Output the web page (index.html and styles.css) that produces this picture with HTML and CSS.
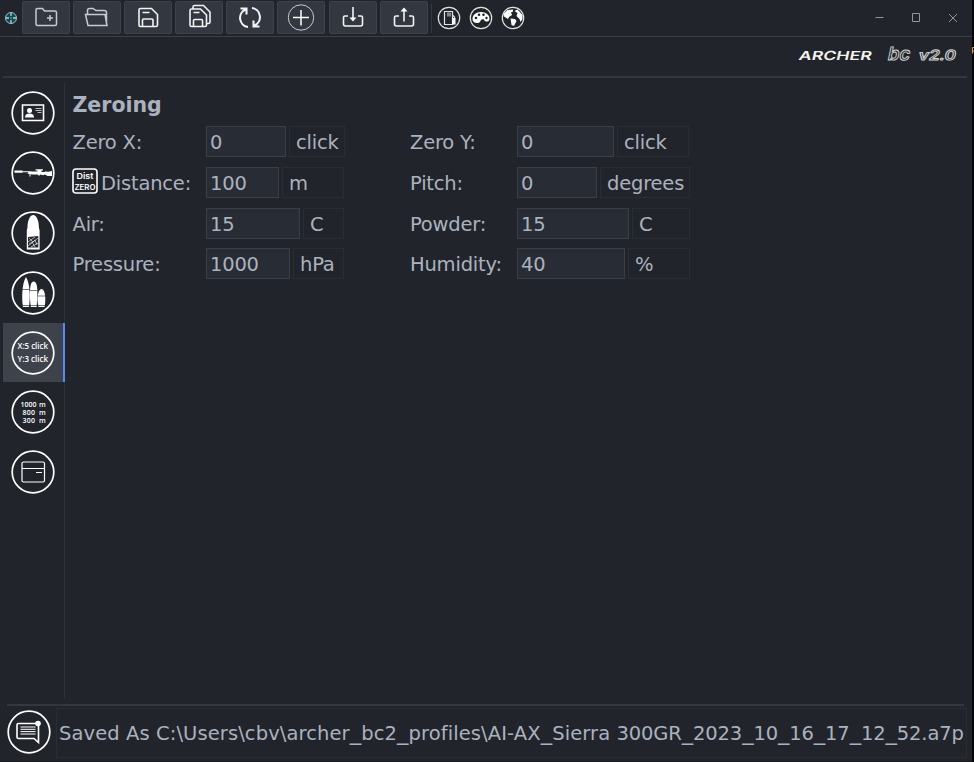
FILE: index.html
```
<!DOCTYPE html>
<html lang="en">
<head>
<meta charset="utf-8">
<title>ARCHER bc v2.0</title>
<link rel="stylesheet" href="styles.css">
</head>
<body>
<div class="window">
  <header class="titlebar">
    <svg class="app-icon" viewBox="0 0 14 14"><circle cx="7" cy="7" r="5.5" fill="#0c4c56" stroke="#a9bfc1"/><path d="M7 2v3M7 9v3M2 7h3M9 7h3M7 6.5v1" stroke="#b8d0d1" stroke-width="1.3"/></svg>
    <div class="tools">
      <button class="tool"><svg viewBox="0 0 48 33"><path d="M14 23V9q0-1.500 1.500-1.500h5l2 2.500h10.500q1.500 0 1.500 1.500V23q0 1.500-1.500 1.500H15.500Q14 24.500 14 23zM28 14v6M25 17h6"/></svg></button>
      <button class="tool"><svg viewBox="0 0 48 33"><path d="M14.500 13V9.500q0-2 2-2H20l3 2h8q2.500 0 2.500 2V23M12.500 13.500h19.500l2 11H15z"/></svg></button>
      <button class="tool bright"><svg viewBox="0 0 48 33"><path d="M15 9q0-1.500 1.500-1.500h11l6 6V24q0 1.500-1.500 1.500H16.500Q15 25.500 15 24zM18.500 25v-6q0-1 1-1h8.500q1 0 1 1v6M18.500 11.500h7"/></svg></button>
      <button class="tool bright"><svg viewBox="0 0 48 33"><path d="M15 9.500q0-1.500 1.500-1.500h9l6 6V24q0 1.500-1.500 1.500H16.500Q15 25.500 15 24zM18.500 25v-5.500q0-1 1-1h7q1 0 1 1V25M18.500 11.500h6M18 7.500V6q0-1.500 1.500-1.500h9l6.500 6.500V21q0 1.500-1.500 1.500H32"/></svg></button>
      <button class="tool bright"><svg viewBox="0 0 48 33"><path class="thick" d="M22 26A9.200 9.200 0 0 1 19.500 8.500M14.500 7.500h6v6M26 7A9.200 9.200 0 0 1 28.500 24.500M33.500 25.500h-6v-6"/></svg></button>
      <button class="tool"><svg viewBox="0 0 48 33"><circle cx="24" cy="16.500" r="12.700" stroke-width="1"/><path d="M24 9v15.500M16 16.500h16" stroke="#fff"/></svg></button>
      <button class="tool bright"><svg viewBox="0 0 48 33"><path d="M19 15h-3q-1.500 0-1.500 1.500V23q0 2 2 2h15q2 0 2-2v-6.500q0-1.500-1.500-1.500H29M24 6v12"/><path d="M20.500 16.500h7L24 20.500z" fill="#fff" stroke="none"/></svg></button>
      <button class="tool bright"><svg viewBox="0 0 48 33"><path d="M19 15h-3q-1.500 0-1.500 1.500V23q0 2 2 2h15q2 0 2-2v-6.500q0-1.500-1.500-1.500H29M24 20.500V8"/><path d="M20.500 10.500h7L24 6.500z" fill="#fff" stroke="none"/></svg></button>
    </div>
    <div class="rounds">
      <svg viewBox="0 0 24 24"><circle cx="12" cy="12" r="10.700"/><path d="M7.500 5.500h8v13h-8zM15.500 9l2 2v3"/><path d="M10 6.500h4v4h-4z" fill="#888" stroke="none"/><path d="M15 12h3.500v6.500H15z" fill="#fff" stroke="none"/></svg>
      <svg viewBox="0 0 24 24"><circle cx="12" cy="12" r="10.700"/><path d="M3.500 13c0-4 3.500-7 8.500-7 5 0 8.500 3 8.500 6.500 0 4-4.500 3.500-5 2-.8-2-3.500-1.500-4 .5-.5 3-8 3-8-2z" fill="#fff" stroke="none"/><g fill="#20242b" stroke="none"><circle cx="7" cy="12" r="1.300"/><circle cx="10" cy="8.700" r="1.300"/><circle cx="14.500" cy="8.700" r="1.300"/><circle cx="17.500" cy="12" r="1.200"/></g></svg>
      <svg viewBox="0 0 24 24"><circle cx="12" cy="12" r="10.700"/><path d="M2.500 8l4-4 5.500-.5v2l-2 1 1 2.500-3 2-1 2-4-2.500zM9.500 12.500l4.500.5 1.500 2-2.500 5-2.500-1-.5-3.500zM13.500 5l3-1.500 5 5.500v4l-2 3-1-3-3-3 1-3z" fill="#fff" stroke="none"/></svg>
    </div>
    <svg class="controls" viewBox="0 0 90 20"><path d="M6.500 10.500h8M43.500 6.500h7v8h-7zM80 7l8 8M88 7l-8 8"/></svg>
  </header>

  <div class="brand">
    <svg viewBox="0 0 170 30">
      <g transform="skewX(-12)"><text class="archer" x="9" y="23" textLength="73" lengthAdjust="spacingAndGlyphs">ARCHER</text></g>
      <g transform="skewX(-12)"><text class="version big" x="98" y="23" textLength="22" lengthAdjust="spacingAndGlyphs">bc</text><text class="version" x="129" y="23" textLength="37" lengthAdjust="spacingAndGlyphs">v2.0</text></g>
    </svg>
  </div>

  <div class="main">
    <nav class="sidebar">
      <a class="nav"><svg viewBox="0 0 46 46"><circle cx="23" cy="23" r="20.800"/><path d="M12.500 15h21v15.500h-21z" stroke-width="1.600"/><circle cx="19.500" cy="20.500" r="2.500" class="solid"/><path class="solid" d="M15 27.500q0-4 4.500-4t4.500 4z"/><path d="M25.500 18.500h6M25.500 20.500h6M27.500 22.500h4" stroke-width=".7"/></svg></a>
      <a class="nav"><svg viewBox="0 0 46 46"><circle cx="23" cy="23" r="20.800"/><path class="solid" d="M4.500 20.500h8v2.200h-8zM12.500 21.300h9v1h-9zM19 21.500h10l2 .5h3l1.500-.5 3 .3 3.500-.8v5h-4.500l-2.500-1.500-2 .8-2.500-.8-1.500 1.200-1.500-1.200h-6l-1-.5V26.500h-1V24l-2-.5zM25.500 19.300h7.500v1.200h-1.500v1.500h-4v-1.500h-2z"/></svg></a>
      <a class="nav"><svg viewBox="0 0 46 46"><circle cx="23" cy="23" r="20.800"/><path class="solid" d="M16.800 39.500V20.500l.7-3c0-7 2.500-12.500 5.700-12.500s5.700 5.500 5.700 12.500l.7 3v19z"/><path d="M18 27l10.300-1v11.500H18z" fill="#252930" stroke="none"/><path d="M18 32l7-5M18 36l10-8M21 37l7-4M19 28l4 4 2-2 2 5M19 34l3-2 3 5" stroke-width=".6"/></svg></a>
      <a class="nav"><svg viewBox="0 0 46 46"><circle cx="23" cy="23" r="20.800"/><path class="solid" d="M13 37c-1.500-9-1-24 3-30 4 6 4.500 21 3 30zM20.800 37c-1-8-1.500-22 1-24.500q1.900-2 3.800 0c2.500 2.500 2 16.500 1 24.500zM28.500 37c-1.500-6-1-14 1.200-17q1.800-2 3.600 0c2.200 3 2.700 11 1.200 17z"/><path d="M12 19.500h8M20 20.500h7M27.500 26h8M12 35.500h24" stroke="#20242b" stroke-width=".6"/></svg></a>
      <a class="nav active"><svg viewBox="0 0 46 46"><circle cx="23" cy="23" r="20.800"/><text class="click-text" x="7.500" y="18.800" textLength="30.500" lengthAdjust="spacingAndGlyphs">X:5 click</text><text class="click-text" x="7.500" y="32" textLength="30.500" lengthAdjust="spacingAndGlyphs">Y:3 click</text></svg></a>
      <a class="nav"><svg viewBox="0 0 46 46"><circle cx="23" cy="23" r="20.800"/><g class="range-text"><text x="10.500" y="17.500" textLength="16" lengthAdjust="spacingAndGlyphs">1000</text><text x="29" y="17.500">m</text><text x="12.500" y="25.500" textLength="12.500">800</text><text x="29" y="25.500">m</text><text x="12.500" y="33.500" textLength="12.500">300</text><text x="29" y="33.500">m</text></g></svg></a>
      <a class="nav"><svg viewBox="0 0 46 46"><circle cx="23" cy="23" r="20.800"/><rect x="12" y="13" width="22.500" height="20" rx="1.500" stroke-width="1.200"/><path d="M12 19.500h22M26 23.500h6" stroke-width="1.100"/></svg></a>
    </nav>
    <main class="content">
      <h1>Zeroing</h1>
      <div class="form">
        <label>Zero X:</label><div class="field"><span class="value w80">0</span><span class="unit u56">click</span></div>
        <label>Zero Y:</label><div class="field"><span class="value w97">0</span><span class="unit u72">click</span></div>
        <label><svg class="dist" viewBox="0 0 26 26"><rect x="1" y="1" width="24" height="24" rx="3"/><text class="dist-top" x="4.500" y="11" textLength="17" lengthAdjust="spacingAndGlyphs">Dist</text><text x="2.500" y="21.500" textLength="21" lengthAdjust="spacingAndGlyphs">ZERO</text></svg>Distance:</label><div class="field"><span class="value w73">100</span><span class="unit u62">m</span></div>
        <label>Pitch:</label><div class="field"><span class="value w80">0</span><span class="unit u90">degrees</span></div>
        <label>Air:</label><div class="field"><span class="value w94">15</span><span class="unit u41">C</span></div>
        <label>Powder:</label><div class="field"><span class="value w112">15</span><span class="unit u58">C</span></div>
        <label>Pressure:</label><div class="field"><span class="value w84">1000</span><span class="unit u51">hPa</span></div>
        <label>Humidity:</label><div class="field"><span class="value w108">40</span><span class="unit u62">%</span></div>
      </div>
    </main>
  </div>

  <footer class="footer">
    <svg class="message" viewBox="0 0 46 46"><circle cx="23" cy="23" r="20.800"/><path d="M31 14.500H12.500q-1.500 0-1.500 1.500v12q0 1.500 1.500 1.500H28l4.500 4V17" stroke-width="1.600"/><circle class="solid" cx="32" cy="14.500" r="2.800"/><path d="M14.500 18h15M14.500 20.300h15M14.500 22.600h15M14.500 25h15" stroke-width="1"/></svg>
    <div class="status"><span class="path">Saved As C:\Users\cbv\archer<u>_</u>bc2<u>_</u>profiles\AI-AX<u>_</u>Sierra </span>300GR<u>_</u>2023<u>_</u>10<u>_</u>16<u>_</u>17<u>_</u>12<u>_</u>52.a7p</div>
  </footer>
</div>
<svg class="edge" viewBox="0 0 2 762"><path d="M.5 47.500v6M.5 47.500h1.500M.5 51h1.500"/></svg>
</body>
</html>
```
FILE: styles.css
```
* { box-sizing: border-box; }
body { margin: 0; width: 974px; height: 762px; display: flex; overflow: hidden; background: #050607; color: #abb2bf; font: 19.5px "DejaVu Sans", sans-serif; }
.window { width: 972px; height: 762px; background: #21252b; display: flex; flex-direction: column; border-bottom: 1px solid #17191d; }
svg { display: block; fill: none; stroke: #fff; }
svg text { stroke: none; fill: #fff; letter-spacing: 0; }
.edge { width: 2px; height: 762px; stroke: #d09a50; stroke-width: 1; }
.solid { fill: #fff; stroke: none; }

.titlebar { height: 37px; display: flex; align-items: flex-start; border-bottom: 1px solid #3a3e46; }
.app-icon { width: 14px; height: 14px; margin: 11px 0 0 4px; }
.tools { display: flex; gap: 3.1px; padding: 1px 3.5px 0 4px; }
.tool { width: 48px; height: 33px; padding: 0; border: 1px solid #3e424a; border-radius: 2px; background: #333740; }
.tool svg { width: 48px; height: 33px; margin: -1px; stroke: #c8cacd; stroke-width: 1.5; }
.tool.bright svg { stroke: #f2f2f2; stroke-width: 1.6; }
.tool svg .thick { stroke-width: 2.1; }
.rounds { display: flex; gap: 8px; padding: 2px 0 0 5px; border-left: 1px solid #343840; height: 29px; margin-top: 4px; }
.rounds svg { width: 24px; height: 24px; stroke: #e2e2e2; stroke-width: 1.2; }
.controls { width: 90px; height: 20px; margin: 7px 13px 0 auto; stroke: #92959a; stroke-width: 1; }

.brand { height: 41px; margin: 0 5px 0 3px; border-bottom: 2px solid #333740; display: flex; justify-content: flex-end; }
.brand svg { width: 170px; height: 30px; margin-right: 3px; overflow: visible; }
.brand .archer { font: 600 12.5px Inter, sans-serif; fill: #f4f4ef; }
.brand .version { font: 600 14px Inter, sans-serif; fill: #21252b; stroke: #d5d5d5; stroke-width: .9; }
.brand .version.big { font-size: 18px; }

.main { flex: 1; display: flex; margin-left: 3px; }
.sidebar { width: 62px; height: 616px; margin-top: 5px; border-right: 1px solid #2d3138; display: flex; flex-direction: column; }
.nav { height: 59.9px; width: 61px; padding: 7px 0 0 7.4px; flex: none; }
.nav.active { background: #3d424b; border-right: 2px solid #568af2; width: 62px; }
.nav svg, .message { width: 46px; height: 46px; stroke-width: 1.7; }
.nav .click-text { font: 600 8px "Open Sans"; }
.nav .range-text text { font: 600 7px "Open Sans"; }

.content { padding: 13px 0 0 7.5px; }
h1 { margin: 0; font-size: 20.5px; line-height: 29px; height: 35px; }
.form { display: grid; grid-template-columns: 133.5px 204px 107px 173px; grid-auto-rows: 31px; row-gap: 9.8px; letter-spacing: -.2px; }
label { display: flex; align-items: center; white-space: nowrap; gap: 3px; padding-top: 2px; }
.dist { width: 26px; height: 26px; stroke-width: 1.6; margin: -4px 0 0 -.5px; }
.dist text { font: 600 7.5px Inter; }
.dist .dist-top { font-size: 8px; }
.field { display: flex; gap: 3px; }
.value, .unit { height: 31px; line-height: 32px; border: 1px solid #3a3f47; flex: none; white-space: nowrap; }
.value { padding-left: 3px; background: #282c34; }
.unit { padding-left: 6px; border-color: #292d34; }
.w73 { width: 73px; } .w80 { width: 80px; } .w84 { width: 84px; }
.w94 { width: 94px; } .w97 { width: 97px; } .w108 { width: 108px; } .w112 { width: 112px; }
.u41 { width: 41px; } .u51 { width: 51px; } .u56 { width: 56px; } .u58 { width: 58px; }
.u62 { width: 62px; } .u72 { width: 72px; } .u90 { width: 90px; }

.footer { height: 57px; margin: 0 8px 0 7px; border-top: 2px solid #333740; display: flex; }
.message { margin: 3px 0 0 -1px; }
.status { margin: 2px -3px 0 4px; height: 50px; width: 911px; border: 1px solid #292d34; line-height: 50px; padding-left: 2px; white-space: nowrap; letter-spacing: -.13px; }
.status .path { letter-spacing: .1px; }
.status u { text-decoration: none; font-size: 22.8px; line-height: 1; }
```
